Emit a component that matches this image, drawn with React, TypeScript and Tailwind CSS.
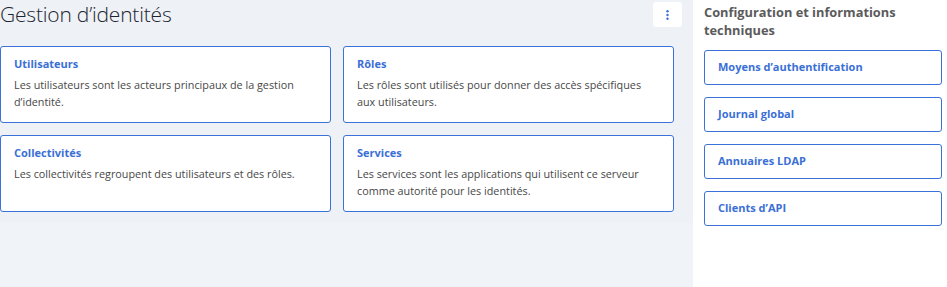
import React from "react";

const cards = [
  { title: "Utilisateurs", text: "Les utilisateurs sont les acteurs principaux de la gestion d’identité." },
  { title: "Rôles", text: "Les rôles sont utilisés pour donner des accès spécifiques aux utilisateurs." },
  { title: "Collectivités", text: "Les collectivités regroupent des utilisateurs et des rôles." },
  { title: "Services", text: "Les services sont les applications qui utilisent ce serveur comme autorité pour les identités." },
];

const links = ["Moyens d’authentification", "Journal global", "Annuaires LDAP", "Clients d’API"];

function Card({ title, text }: { title: string; text: string }) {
  return (
    <div className="h-[77px] rounded-[3px] border border-[#3b72d9] bg-white pl-[13px] pr-3 pt-[9px]">
      <div className="text-[11px] font-bold leading-[16px] text-[#3a6fd6]">{title}</div>
      <p className="mt-[4px] text-[10.8px] leading-[17px] text-[#474747]">{text}</p>
    </div>
  );
}

export default function App() {
  return (
    <div className="flex h-[287px] w-[947px] bg-white font-['Open_Sans',sans-serif]">
      <main className="flex w-[693px] flex-col bg-[#eef1f5]">
        <div className="flex h-[46px] items-start justify-between pr-[11px]">
          <h1 className="text-[21px] font-light leading-[28px] tracking-[-0.2px] text-[#1d2430]">
            Gestion d’identités
          </h1>
          <button className="mt-[2px] flex h-[25px] w-[29px] items-center justify-center rounded-[3px] bg-white">
            <svg width="3" height="10" viewBox="0 0 3 10">
              <circle cx="1.5" cy="1.3" r="1.2" fill="#3a6fd6" />
              <circle cx="1.5" cy="5" r="1.2" fill="#3a6fd6" />
              <circle cx="1.5" cy="8.7" r="1.2" fill="#3a6fd6" />
            </svg>
          </button>
        </div>
        <div className="grid w-[674px] grid-cols-2 gap-3">
          {cards.map((c) => (
            <Card key={c.title} title={c.title} text={c.text} />
          ))}
        </div>
        <div className="mt-[11px] flex-1 bg-[#f0f3f7]" />
      </main>
      <aside className="flex-1 pl-[11px] pr-[5px] pt-[3px]">
        <h2 className="text-[12.8px] font-bold leading-[18px] text-[#5b5b5b]">
          Configuration et informations techniques
        </h2>
        <div className="mt-[11px] flex flex-col gap-3">
          {links.map((l) => (
            <div
              key={l}
              className="flex h-[35px] items-center rounded-[3px] border border-[#3b72d9] bg-white pl-[13px] text-[11px] font-bold text-[#3a6fd6]"
            >
              {l}
            </div>
          ))}
        </div>
      </aside>
    </div>
  );
}
